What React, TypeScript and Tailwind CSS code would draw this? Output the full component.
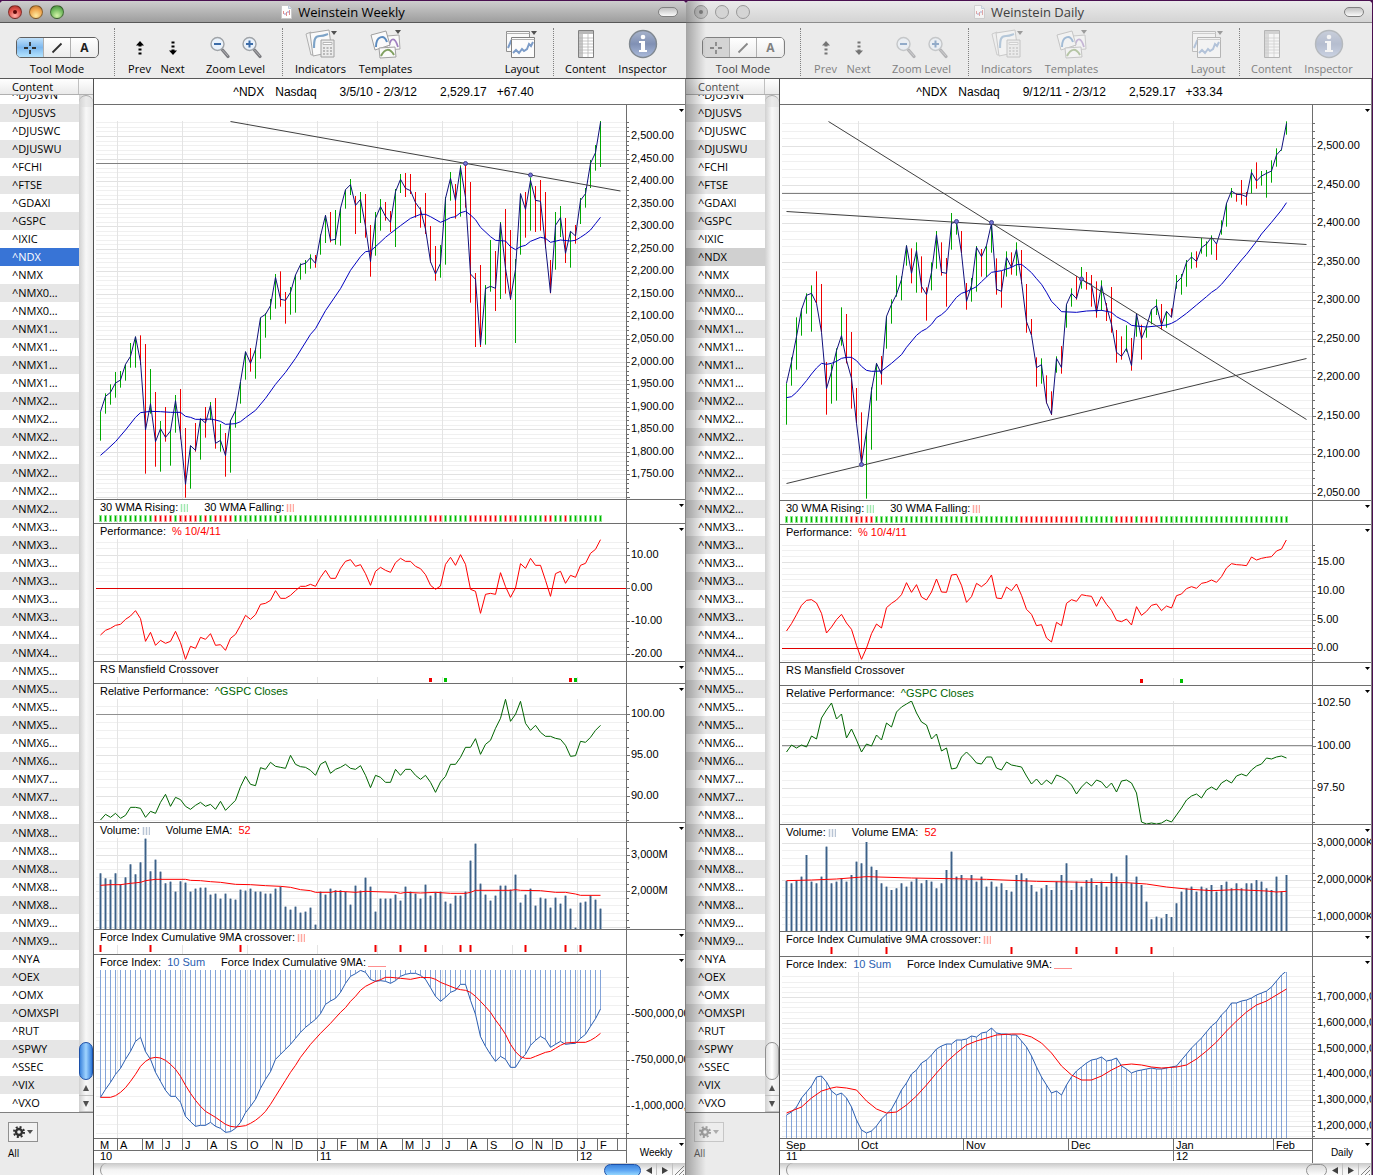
import { createContext, useContext, useState } from 'react';
import type { ReactNode } from 'react';
import clsx from 'clsx';

// Series are stored in thirds of a pixel below the panel group's base line.
const nums = (text: string) => text.trim().split(/\s+/).map(Number);
const fromPixels = (base: number, text: string) => nums(text).map((y) => (y - base) * 3).join(' ');
const barX = (index: number) => 6.5 + index * 5;

const MAIN = 100;
const MID = 495;
const LOW = 820;

type Axis = { major: number; step: number; divisions: number; labels: string[] };
type Line = { base: number; points: string; color: string };
type Label = { text: string; color?: string; gap?: boolean; glyph?: 'bars' | 'line'; glyphColor?: string };

type Panel = {
  id: string;
  top: number;
  bottom: number;
  labels: Label[];
  axis?: Axis;
  rule?: { y: number; color: string };
  lines?: Line[];
  closes?: string;
  ranges?: string;
  strip?: string;
  marks?: { at: number; color: string; square?: boolean }[];
  volume?: string;
  hatch?: string;
  hangs?: boolean;
  trends?: number[][];
  handles?: number[][];
};

type Chart = {
  title: string;
  quote: string[];
  active: boolean;
  period: string;
  quarters: number[];
  months: { x: number; label: string }[];
  years: { x: number; label: string }[];
  panels: Panel[];
};

const GREEN = '#00a800';
const RED = '#f00000';

const weekly: Chart = {
  title: 'Weinstein Weekly',
  quote: ['^NDX', 'Nasdaq', '3/5/10 - 2/3/12', '2,529.17', '+67.40'],
  active: true,
  period: 'Weekly',
  quarters: [23, 88, 153, 223, 283, 348, 418, 483],
  months: [
    { x: 3, label: 'M' }, { x: 23, label: 'A' }, { x: 48, label: 'M' }, { x: 68, label: 'J' }, { x: 88, label: 'J' },
    { x: 113, label: 'A' }, { x: 133, label: 'S' }, { x: 153, label: 'O' }, { x: 178, label: 'N' }, { x: 198, label: 'D' },
    { x: 223, label: 'J' }, { x: 243, label: 'F' }, { x: 263, label: 'M' }, { x: 283, label: 'A' }, { x: 308, label: 'M' },
    { x: 328, label: 'J' }, { x: 348, label: 'J' }, { x: 373, label: 'A' }, { x: 393, label: 'S' }, { x: 418, label: 'O' },
    { x: 438, label: 'N' }, { x: 458, label: 'D' }, { x: 483, label: 'J' }, { x: 503, label: 'F' }, { x: 523, label: '' },
  ],
  years: [{ x: 3, label: '10' }, { x: 223, label: '11' }, { x: 483, label: '12' }],
  panels: [
    {
      id: 'price',
      top: 105,
      bottom: 499,
      labels: [],
      axis: {
        major: 136, step: 22.56, divisions: 5,
        labels: ['2,500.00', '2,450.00', '2,400.00', '2,350.00', '2,300.00', '2,250.00', '2,200.00', '2,150.00', '2,100.00', '2,050.00', '2,000.00', '1,950.00', '1,900.00', '1,850.00', '1,800.00', '1,750.00'],
      },
      rule: { y: 163, color: '#808080' },
      closes: `935 889 877 849 840 793 769 710 785 990 911 1025 986 1012 993 902 1003 1153 1037 1051 956 969 916 1030 1021 1067 962 932 845 755
        790 748 653 643 617 532 598 601 577 525 494 490 473 490 408 346 421 418 325 269 254 316 298 379 485 355 320 349 367 275
        238 265 272 308 329 387 485 522 490 295 235 301 202 292 522 538 735 566 559 565 370 505 597 508 281 328 241 301 304 438
        579 376 353 460 394 408 301 281 190 158 67`,
      ranges: `935 1022 880 941 853 914 816 893 813 863 793 842 729 803 710 803 706 795 732 1121 807 941 876 1100 963 1115 921 1025 990 1097 885 998
        867 1018 984 1193 1037 1166 969 1055 956 1079 921 1013 906 960 894 1046 972 1055 999 1130 960 1118 932 983 845 911 755 839 744 815 745 836
        653 776 640 713 597 659 522 626 514 620 576 671 561 644 525 638 490 539 480 521 463 506 465 503 403 464 346 429 336 427 330 434
        325 437 269 326 237 285 288 402 276 369 282 413 375 530 336 467 297 392 306 362 333 396 267 441 222 279 219 291 222 282 276 353
        322 383 279 402 378 488 438 542 435 533 291 494 216 302 252 356 196 350 192 323 246 608 519 741 495 741 555 734 420 575 453 633
        366 597 327 581 390 600 477 729 281 464 276 413 232 392 258 396 240 392 276 445 480 580 336 509 318 411 354 489 394 503 375 431
        294 372 264 323 180 264 135 212 63 201`,
      lines: [
        {
          base: MAIN, color: '#0000c0',
          points: `0 1066 1 1053 3 1025 5 990 7 952 8 938 10 934 12 935 14 937 16 937 17 949 18 952 19 958 21 958 22 957 23 960 24 964 25 973 27 971 28 965
            29 953 31 931 33 895 35 853 37 817 39 775 42 703 43 686 45 632 48 566 50 511 52 470 53 455 54 453 55 440 57 412 58 400 60 377 62 355 64 343
            65 343 66 350 68 367 69 361 70 353 71 350 72 338 73 334 74 345 75 359 76 382 78 410 79 421 81 423 82 440 83 449 84 440 85 436 86 424 88 412
            89 415 90 427 92 420 94 423 95 421 96 412 97 402 98 390 99 371 100 352`,
        },
      ],
      trends: [[136.5, 121.5, 526.5, 191]],
      handles: [[371.5, 163.5], [436.5, 175]],
    },
    {
      id: 'wma',
      top: 500,
      bottom: 523,
      labels: [
        { text: '30 WMA Rising:', glyph: 'bars', glyphColor: '#a0e8b0' },
        { text: '30 WMA Falling:', gap: true, glyph: 'bars', glyphColor: '#ffa8a0' },
      ],
      strip: 'g11 r4 g1 r4 g1 r1 g1 r4 g39 r3 g5 r6 g1 r3 g5 r2 g2 r1 g7',
    },
    {
      id: 'performance',
      top: 524,
      bottom: 661,
      labels: [{ text: 'Performance:' }, { text: '% 10/4/11', color: 'text-[#ff0000]' }],
      axis: { major: 555, step: 33, divisions: 5, labels: ['10.00', '0.00', '-10.00', '-20.00'] },
      rule: { y: 588, color: '#e00000' },
      lines: [
        {
          base: MID, color: '#ff0000',
          points: `420 406 400 391 388 373 363 347 371 439 412 451 436 445 439 409 443 493 454 460 427 433 416 451 449 466 430 418 391 361
            373 359 328 325 316 287 310 310 301 287 274 274 268 274 247 226 250 250 220 199 194 214 209 236 271 229 217 226 232 203
            190 199 199 214 221 239 271 283 273 208 187 211 179 208 283 289 355 298 295 298 233 275 307 279 206 220 190 211 211 256
            304 236 229 265 241 247 211 205 175 163 134`,
        },
      ],
    },
    {
      id: 'mansfield',
      top: 662,
      bottom: 683,
      labels: [{ text: 'RS Mansfield Crossover' }],
      marks: [
        { at: 66, color: RED, square: true }, { at: 69, color: '#00c000', square: true },
        { at: 94, color: RED, square: true }, { at: 95, color: '#00c000', square: true },
      ],
    },
    {
      id: 'relative',
      top: 684,
      bottom: 822,
      labels: [{ text: 'Relative Performance:' }, { text: '^GSPC Closes', color: 'text-[#006400]' }],
      axis: { major: 714, step: 40.8, divisions: 5, labels: ['100.00', '95.00', '90.00'] },
      rule: { y: 714, color: '#909090' },
      lines: [
        {
          base: MID, color: '#006400',
          points: `975 958 967 955 970 961 937 937 940 967 949 955 922 898 934 907 914 934 943 931 922 934 928 943 919 946 931 916 875 844
            868 872 818 823 802 814 817 820 781 808 815 817 826 841 808 799 835 823 817 808 820 823 812 841 878 841 847 862 862 823
            841 823 823 841 853 841 862 892 861 844 808 808 787 757 757 731 778 748 736 700 670 613 679 658 619 685 706 691 712 724
            724 730 733 751 784 782 739 742 727 706 691`,
        },
      ],
    },
    {
      id: 'volume',
      top: 823,
      bottom: 929,
      labels: [
        { text: 'Volume:', glyph: 'bars', glyphColor: '#b8c4d4' },
        { text: 'Volume EMA:', gap: true },
        { text: '52', color: 'text-[#ff0000]' },
      ],
      axis: { major: 855, step: 36, divisions: 5, labels: ['3,000M', '2,000M'] },
      volume: `160 175 179 160 193 172 133 163 127 56 154 119 155 190 185 215 184 188 215 206 203 203 224 221 236 221 236 239 209 212
        206 215 215 221 221 206 200 260 269 260 278 275 263 314 215 224 206 211 211 215 254 197 212 173 200 275 236 236 236 224
        242 200 215 221 236 194 227 217 215 245 251 227 227 215 122 71 191 224 242 227 197 197 209 164 248 224 206 257 233 236
        263 233 251 227 266 323 248 245 227 239 266`,
      lines: [
        {
          base: LOW, color: '#ff0000',
          points: `0 196 2 194 4 194 6 190 8 187 9 182 11 178 17 178 18 181 20 182 22 185 24 187 27 193 30 194 33 197 36 199 38 202 40 209 42 212 43 217
            46 217 47 214 49 215 51 217 53 214 59 217 60 220 61 217 64 219 67 217 70 220 73 220 74 217 75 211 82 211 83 209 84 211 88 212 91 217 93 217
            95 222 96 226 100 226`,
        },
      ],
    },
    {
      id: 'crossover',
      top: 930,
      bottom: 954,
      labels: [{ text: 'Force Index Cumulative 9MA crossover:', glyph: 'bars', glyphColor: '#ffa8a0' }],
      marks: [0, 10, 28, 55, 60, 65, 72, 74, 85, 93, 96].map((at) => ({ at, color: RED })),
    },
    {
      id: 'force',
      top: 955,
      bottom: 1138,
      labels: [
        { text: 'Force Index:' },
        { text: '10 Sum', color: 'text-[#2a5db0]' },
        { text: 'Force Index Cumulative 9MA:', gap: true, glyph: 'line', glyphColor: '#ff9090' },
      ],
      axis: { major: 1014, step: 45.8, divisions: 5, labels: ['-500,000,000', '-750,000,000', '-1,000,000,000'] },
      hangs: true,
      hatch: `832 808 787 763 745 718 694 664 652 695 718 757 784 811 829 829 847 889 905 919 916 916 907 919 925 937 935 925 907 878
        859 838 805 778 755 718 703 688 673 655 637 622 610 598 581 553 543 535 517 490 469 461 451 457 478 484 482 484 490 482
        469 463 460 460 466 478 503 529 544 532 517 511 493 493 541 583 650 679 703 724 709 718 742 742 718 703 676 661 649 658
        682 673 664 673 671 670 655 643 619 596 567`,
      lines: [
        {
          base: LOW, color: '#ff0000',
          points: `0 832 2 832 3 827 4 817 5 803 6 784 7 763 8 739 9 724 10 715 11 712 12 714 13 721 14 733 15 748 16 769 17 796 18 820 19 841 20 859
            21 874 23 892 25 913 26 919 27 921 29 917 30 910 31 901 32 889 33 874 34 853 35 829 37 781 38 757 39 736 40 712 42 673 44 640 46 610 48 577
            49 563 50 544 51 529 52 511 53 499 55 484 56 479 57 472 58 472 60 475 62 478 64 472 66 473 67 478 68 487 69 493 71 505 72 509 73 511 74 517
            75 529 76 544 77 560 78 577 79 600 80 620 81 643 82 673 83 695 84 710 85 715 86 715 87 709 89 697 90 694 91 685 92 676 93 669 95 667 97 667
            98 661 99 652 100 640`,
        },
      ],
    },
  ],
};

const dailyCloses = `850 785 710 629 586 580 610 697 866 815 752 707 781 835 970 1090 994 871 790 823 649 613 583 538 437 520 452 559 584 517
  404 517 520 370 365 460 604 556 442 470 436 370 568 574 472 503 448 544 665 706 803 794 908 943 775 803 613 580 596 538
  548 553 638 557 620 673 757 769 745 797 641 716 680 629 617 676 634 652 548 532 487 471 484 443 432 412 432 385 310 273
  283 284 290 217 243 228 220 213 165 148 70`;

// Percent change is the same curve as the closes, on a flatter scale around the 10/4/11 close.
const dailyPerformance = nums(dailyCloses).map((v) => Math.round(459 + (v - 994) * 0.3513)).join(' ');

const daily: Chart = {
  title: 'Weinstein Daily',
  quote: ['^NDX', 'Nasdaq', '9/12/11 - 2/3/12', '2,529.17', '+33.34'],
  active: false,
  period: 'Daily',
  quarters: [78, 393],
  months: [
    { x: 3, label: 'Sep' }, { x: 78, label: 'Oct' }, { x: 183, label: 'Nov' }, { x: 288, label: 'Dec' }, { x: 393, label: 'Jan' }, { x: 493, label: 'Feb' },
  ],
  years: [{ x: 3, label: '11' }, { x: 393, label: '12' }],
  panels: [
    {
      id: 'price',
      top: 105,
      bottom: 500,
      labels: [],
      axis: {
        major: 146, step: 38.55, divisions: 5,
        labels: ['2,500.00', '2,450.00', '2,400.00', '2,350.00', '2,300.00', '2,250.00', '2,200.00', '2,150.00', '2,100.00', '2,050.00'],
      },
      rule: { y: 193, color: '#808080' },
      closes: dailyCloses,
      ranges: `850 974 772 857 652 809 625 707 580 641 556 695 514 610 552 697 786 944 793 911 745 902 622 737 642 790 696 926 864 970 937 1090
        994 1196 862 1049 790 902 768 854 649 746 598 671 526 590 529 601 436 497 445 550 427 578 469 578 562 662 487 571 393 506 427 527
        474 620 339 449 365 404 393 460 549 629 534 605 438 575 447 530 436 531 370 458 475 584 513 623 454 530 457 524 427 527 450 551
        552 698 657 706 772 860 775 851 826 910 874 945 769 818 738 821 613 683 565 620 528 599 501 566 516 569 525 620 544 653 541 632
        609 663 561 698 690 788 709 779 676 755 714 812 640 710 674 779 676 713 628 673 598 645 612 689 634 683 625 652 525 566 522 584
        480 560 457 506 454 503 414 461 424 470 406 464 430 480 361 404 309 380 264 293 280 305 240 314 276 317 208 280 187 266 213 257
        210 293 181 248 145 200 148 152 64 104`,
      lines: [
        {
          base: MAIN, color: '#0000c0',
          points: `0 893 1 890 2 877 3 860 4 842 5 822 6 804 7 790 8 793 9 790 10 784 11 775 12 772 13 772 14 782 15 799 16 811 17 814 19 813 21 790
            23 764 24 742 26 706 27 694 28 686 29 673 30 653 31 644 32 631 33 611 34 592 35 580 36 575 38 560 39 545 41 517 43 512 45 502 46 494 47 493
            48 505 49 518 50 536 51 553 52 577 53 604 54 619 55 635 58 637 60 633 63 631 65 637 66 650 67 658 68 665 69 676 70 678 72 681 74 678 76 675
            77 670 78 662 80 640 82 615 84 590 85 577 86 567 87 553 89 517 91 480 92 463 94 424 95 402 97 367 99 330 100 308`,
        },
      ],
      trends: [[48.5, 121.5, 526.5, 419.5], [6.5, 211.5, 526.5, 244.5], [6.5, 483.5, 526.5, 358.5]],
      handles: [[81.5, 464.5], [176.5, 221.5], [211.5, 222.5], [301.5, 279]],
    },
    {
      id: 'wma',
      top: 501,
      bottom: 524,
      labels: [
        { text: '30 WMA Rising:', glyph: 'bars', glyphColor: '#a0e8b0' },
        { text: '30 WMA Falling:', gap: true, glyph: 'bars', glyphColor: '#ffa8a0' },
      ],
      strip: 'g13 r5 g29 r12 g7 r4 g1 r4 g26',
    },
    {
      id: 'performance',
      top: 525,
      bottom: 662,
      labels: [{ text: 'Performance:' }, { text: '% 10/4/11', color: 'text-[#ff0000]' }],
      axis: { major: 562, step: 28.8, divisions: 5, labels: ['15.00', '10.00', '5.00', '0.00'] },
      rule: { y: 648, color: '#e00000' },
      lines: [{ base: MID, color: '#ff0000', points: dailyPerformance }],
    },
    {
      id: 'mansfield',
      top: 663,
      bottom: 685,
      labels: [{ text: 'RS Mansfield Crossover' }],
      marks: [{ at: 71, color: RED, square: true }, { at: 79, color: '#00c000', square: true }],
    },
    {
      id: 'relative',
      top: 686,
      bottom: 824,
      labels: [{ text: 'Relative Performance:' }, { text: '^GSPC Closes', color: 'text-[#006400]' }],
      axis: { major: 703, step: 42.5, divisions: 5, labels: ['102.50', '100.00', '97.50'] },
      rule: { y: 745, color: '#909090' },
      lines: [
        {
          base: MID, color: '#006400',
          points: fromPixels(MID, `752 745 748 745 747 736 739 718 710 703 719 714 738 729 740 752 744 746 735 740 723 727 712 707 704 701
            713 722 725 739 734 751 748 769 768 757 752 757 763 764 757 757 768 770 762 765 766 767 776 784 779 785 780 784 775 777
            780 785 794 787 782 786 780 782 788 783 792 781 780 783 793 822 824 823 824 823 820 822 815 808 800 796 794 798 790 787
            790 783 780 783 776 774 776 770 766 764 758 759 757 756 758`),
        },
      ],
    },
    {
      id: 'volume',
      top: 825,
      bottom: 931,
      labels: [
        { text: 'Volume:', glyph: 'bars', glyphColor: '#b8c4d4' },
        { text: 'Volume EMA:', gap: true },
        { text: '52', color: 'text-[#ff0000]' },
      ],
      axis: { major: 843, step: 37, divisions: 5, labels: ['3,000,000K', '2,000,000K', '1,000,000K'] },
      volume: `183 190 183 170 105 185 190 170 80 190 185 175 185 165 125 130 66 140 150 190 200 210 205 190 200 185 175 190 180 185
        205 190 150 95 170 165 180 165 185 170 200 185 200 190 210 215 165 160 175 195 215 205 195 210 185 165 130 210 185 200
        180 175 195 185 200 160 170 190 106 190 170 195 245 298 290 295 282 291 250 215 205 200 215 200 205 195 215 195 185 205
        190 205 190 190 180 185 205 210 170 215 165`,
      lines: [
        {
          base: LOW, color: '#ff0000',
          points: '0 182 5 180 10 177 16 170 25 174 40 178 50 184 60 187 68 188 72 192 76 201 80 207 85 212 90 209 96 213 98 216 100 214',
        },
      ],
    },
    {
      id: 'crossover',
      top: 932,
      bottom: 956,
      labels: [{ text: 'Force Index Cumulative 9MA crossover:', glyph: 'bars', glyphColor: '#ffa8a0' }],
      marks: [9, 20, 45, 58, 66, 73].map((at) => ({ at, color: RED })),
    },
    {
      id: 'force',
      top: 957,
      bottom: 1138,
      labels: [
        { text: 'Force Index:' },
        { text: '10 Sum', color: 'text-[#2a5db0]' },
        { text: 'Force Index Cumulative 9MA:', gap: true, glyph: 'line', glyphColor: '#ff9090' },
      ],
      axis: {
        major: 997, step: 25.8, divisions: 5,
        labels: ['1,700,000,000', '1,600,000,000', '1,500,000,000', '1,400,000,000', '1,300,000,000', '1,200,000,000'],
      },
      hatch: fromPixels(LOW, `1115 1112 1107 1098 1092 1086 1077 1076 1082 1091 1095 1093 1098 1107 1120 1130 1133 1131 1126 1119 1114
        1109 1100 1090 1083 1074 1070 1063 1060 1055 1049 1046 1044 1044 1040 1040 1039 1036 1037 1033 1032 1028 1033 1034 1034 1035
        1035 1041 1047 1056 1067 1077 1085 1093 1091 1095 1085 1077 1071 1067 1063 1060 1059 1057 1061 1060 1058 1066 1069 1073 1071
        1070 1069 1068 1069 1069 1068 1067 1066 1060 1054 1048 1043 1038 1032 1026 1022 1015 1010 1003 1003 1001 1000 998 995 993
        991 987 981 975 971`),
      lines: [
        {
          base: LOW, color: '#ff0000',
          points: `0 879 3 861 5 834 7 813 9 804 10 801 12 804 14 810 16 843 18 867 20 879 22 876 24 855 26 828 28 795 30 759 32 726 34 699
            36 675 38 663 40 654 42 645 45 642 47 642 49 651 51 669 53 699 55 738 57 765 59 780 61 780 63 768 65 750 67 735 69 732 71 735
            73 741 75 744 78 741 80 735 82 717 84 693 86 666 88 633 90 603 92 576 94 555 96 543 98 525 100 507`,
        },
      ],
    },
  ],
};

const symbols = [
  'DJUSVN', 'DJUSVS', 'DJUSWC', 'DJUSWU', 'FCHI', 'FTSE', 'GDAXI', 'GSPC', 'IXIC', 'NDX', 'NMX',
  ...'00111122222223333334455556677888888'.split('').map((n) => `NMX${n}…`),
  'NMX9…', 'NMX9…', 'NYA', 'OEX', 'OMX', 'OMXSPI', 'RUT', 'SPWY', 'SSEC', 'VIX', 'VXO',
];

const ActiveContext = createContext(true);

function toPolyline(line: Line) {
  const values = nums(line.points);
  // Dense series hold one value per bar, sparse ones alternate index and value.
  if (values.length === 101) {
    return values.map((v, i) => `${barX(i)},${line.base + v / 3}`).join(' ');
  }
  const out: string[] = [];
  for (let i = 0; i < values.length; i += 2) {
    out.push(`${barX(values[i])},${line.base + values[i + 1] / 3}`);
  }
  return out.join(' ');
}

function expandRuns(strip: string) {
  return strip.split(' ').flatMap((run) => Array<string>(Number(run.slice(1))).fill(run[0]));
}

function gridRows(axis: Axis, top: number, bottom: number) {
  const rows: { y: number; major: boolean; label?: string }[] = [];
  const minor = axis.step / axis.divisions;
  for (let k = -20; k < 100; k += 1) {
    const y = Math.round(axis.major + k * minor);
    if (y < top || y >= bottom) continue;
    const major = k % axis.divisions === 0;
    rows.push({ y, major, label: major ? axis.labels[k / axis.divisions] : undefined });
  }
  return rows;
}

function Plot({ panel, quarters }: { panel: Panel; quarters: number[] }) {
  const top = panel.top + (panel.id === 'price' ? 16 : 15);
  const { bottom } = panel;
  const closes = panel.closes ? nums(panel.closes) : [];
  const ranges = panel.ranges ? nums(panel.ranges) : [];
  const hatch = panel.hatch ? nums(panel.hatch) : [];

  return (
    <svg className="block w-full" height={bottom - top} aria-hidden="true">
      <g transform={`translate(0 ${-top})`}>
        {panel.axis &&
          gridRows(panel.axis, top, bottom).map((row) => (
            <rect key={row.y} x={2} y={row.y} width="100%" height={1} fill={row.major ? '#e2e2e2' : '#f0f0f0'} />
          ))}
        {quarters.map((x) => (
          <rect key={x} x={x} y={top} width={1} height={bottom - top} fill="#e4e4e4" />
        ))}
        {panel.rule && <rect x={2} y={panel.rule.y} width="100%" height={1} fill={panel.rule.color} />}
        {panel.volume &&
          nums(panel.volume).map((v, i) => (
            <g key={i}>
              <rect x={barX(i) - 1.5} y={LOW + v / 3} width={3} height={bottom - LOW} fill="#a4b6c8" />
              <rect x={barX(i) - 0.5} y={LOW + v / 3} width={1} height={bottom - LOW} fill="#3c6088" />
            </g>
          ))}
        {hatch.map((v, i) => {
          const y = LOW + v / 3;
          return (
            <rect key={i} x={barX(i) - 0.5} y={panel.hangs ? top : y} width={1} height={panel.hangs ? y - top : bottom - y} fill="#84a4d8" />
          );
        })}
        {hatch.length > 0 && (
          <polyline points={toPolyline({ base: LOW, points: panel.hatch ?? '', color: '' })} fill="none" stroke="#2a5db0" />
        )}
        {panel.strip &&
          expandRuns(panel.strip).map((c, i) => (
            <g key={i}>
              <rect x={barX(i) - 1.5} y={top} width={3} height={7} fill={c === 'g' ? '#90e890' : '#ff9c9c'} />
              <rect x={barX(i) - 0.5} y={top + 1} width={1} height={5} fill={c === 'g' ? '#00b400' : '#f00000'} />
            </g>
          ))}
        {panel.marks?.map((mark) => (
          <rect
            key={mark.at}
            x={barX(mark.at) - (mark.square ? 1.5 : 1)}
            y={top + (mark.square ? 1 : 0)}
            width={mark.square ? 3 : 2}
            height={mark.square ? 4 : 7}
            fill={mark.color}
          />
        ))}
        {closes.length > 0 &&
          ranges.map((v, k) => {
            if (k % 2) return null;
            const i = k / 2;
            const up = i === 0 || closes[i] <= closes[i - 1];
            return (
              <rect key={i} x={barX(i) - 0.5} y={MAIN + v / 3} width={1} height={(ranges[k + 1] - v) / 3} fill={up ? GREEN : RED} />
            );
          })}
        {panel.lines?.map((line) => (
          <polyline key={line.color} points={toPolyline(line)} fill="none" stroke={line.color} />
        ))}
        {closes.length > 0 && (
          <polyline points={toPolyline({ base: MAIN, points: panel.closes ?? '', color: '' })} fill="none" stroke="#10107c" />
        )}
        {panel.trends?.map(([x1, y1, x2, y2]) => (
          <line key={y1} x1={x1} y1={y1} x2={x2} y2={y2} stroke="#404040" />
        ))}
        {panel.handles?.map(([x, y]) => (
          <circle key={x} cx={x} cy={y} r={2} fill="#7878d8" stroke="#40408c" />
        ))}
      </g>
    </svg>
  );
}

function ScaleColumn({ panel }: { panel: Panel }) {
  return (
    <div className="relative w-[59px] shrink-0 overflow-hidden border-l border-[#6e6e6e]">
      <svg className="block w-full" height={panel.bottom - panel.top}>
        <g transform={`translate(0 ${-panel.top})`}>
          {panel.axis &&
            gridRows(panel.axis, panel.top + 15, panel.bottom).map((row) => (
              <g key={row.y}>
                <rect x={0} y={row.y} width={row.major ? 3 : 2} height={1} fill="#6e6e6e" />
                {row.label && (
                  <text x={4} y={row.y + 3} fontSize={11}>
                    {row.label}
                  </text>
                )}
              </g>
            ))}
        </g>
      </svg>
      <button type="button" aria-label={`${panel.id} options`} className="absolute top-1 right-px">
        <svg width="5" height="3" className="block">
          <path d="M0 0h5L2.5 3z" />
        </svg>
      </button>
    </div>
  );
}

function LabelGlyph({ kind, color }: { kind: 'bars' | 'line'; color?: string }) {
  if (kind === 'line') {
    return (
      <svg width="18" height="10" className="block">
        <path d="M0 8.5h18" stroke={color} />
      </svg>
    );
  }
  return (
    <svg width="8" height="8" className="block">
      <path d="M1.500 0v8M4.500 0v8M7.500 0v8" stroke={color} strokeWidth="1.5" />
    </svg>
  );
}

function PanelRow({ panel, quarters }: { panel: Panel; quarters: number[] }) {
  return (
    <section className="flex border-b border-[#6e6e6e]">
      <div className="min-w-0 flex-1 overflow-hidden">
        <div className={clsx('flex items-center pl-1.5 text-[11px] whitespace-nowrap', panel.id === 'price' ? 'h-4' : 'h-[15px]')}>
          {panel.labels.map((label) => (
            <span key={label.text} className={clsx('mr-1.5 flex items-center gap-0.5', label.gap && 'ml-2.5', label.color)}>
              {label.text}
              {label.glyph && <LabelGlyph kind={label.glyph} color={label.glyphColor} />}
            </span>
          ))}
        </div>
        <Plot panel={panel} quarters={quarters} />
      </div>
      <ScaleColumn panel={panel} />
    </section>
  );
}

function TimeScale({ chart }: { chart: Chart }) {
  return (
    <div className="flex">
      <svg className="block min-w-0 flex-1" height="22">
        <rect x="0" y="11" width="100%" height="1" fill="#6e6e6e" />
        {chart.months.map((month, i) => (
          <g key={month.x}>
            {i > 0 && <rect x={month.x} y="0" width="1" height="11" fill="#6e6e6e" />}
            <text x={month.x + 3} y="10" fontSize="11">
              {month.label}
            </text>
          </g>
        ))}
        {chart.years.map((year, i) => (
          <g key={year.x}>
            {i > 0 && <rect x={year.x} y="11" width="1" height="11" fill="#6e6e6e" />}
            <text x={year.x + 3} y="21" fontSize="11">
              {year.label}
            </text>
          </g>
        ))}
      </svg>
      <div className="relative w-[59px] shrink-0 border-l border-[#6e6e6e]">
        <select aria-label="Period" defaultValue={chart.period} className="h-5 w-full appearance-none text-center text-[10px]">
          <option>{chart.period}</option>
        </select>
        <svg width="5" height="3" className="pointer-events-none absolute top-1 right-px">
          <path d="M0 0h5L2.5 3z" />
        </svg>
      </div>
    </div>
  );
}

function TitleBar({ title }: { title: string }) {
  const active = useContext(ActiveContext);
  const lights = active
    ? [
        'bg-[radial-gradient(circle_at_50%_80%,#ffb0a8,#e0524a_55%,#9c2c24)]',
        'bg-[radial-gradient(circle_at_50%_80%,#ffeaa0,#f0a850_55%,#b06c28)]',
        'bg-[radial-gradient(circle_at_50%_80%,#d4f4a8,#74bc60_55%,#3c8030)]',
      ]
    : ['bg-[#c4c4c4]', 'bg-[#d4d4d4]', 'bg-[#d4d4d4]'];
  return (
    <header
      className={clsx(
        'grid h-[22px] grid-cols-[1fr_auto_1fr] items-center border-b px-2',
        active ? 'border-[#585858] bg-linear-to-b from-[#cecece] to-[#9e9e9e]' : 'border-[#8c8c8c] bg-linear-to-b from-[#ebebeb] to-[#d4d4d4]',
      )}
    >
      <div className="flex gap-[7px]">
        {['Close', 'Minimize', 'Zoom'].map((name, i) => (
          <button
            key={name}
            type="button"
            aria-label={name}
            className={clsx('flex size-3.5 items-center justify-center rounded-full border', lights[i], active ? 'border-black/40' : 'border-[#999]')}
          >
            {i === 0 && <span className={clsx('size-1 rounded-full', active ? 'bg-[#5c0808]' : 'bg-[#808080]')} />}
          </button>
        ))}
      </div>
      <h1 className={clsx('flex items-center gap-1.5 text-[13px] leading-5', active ? 'text-black' : 'text-[#404040]')}>
        <svg width="11" height="14" viewBox="0 0 11 14" className={active ? '' : 'opacity-70'}>
          <path d="M.5.5h7l3 3v10H.5z" fill="#fff" stroke="#c8c8c8" />
          <path d="M7.5.5v3h3" fill="#e0e8f0" stroke="#b8c8d8" />
          <path d="M2.500 6v3M5.500 7v4M8.500 5v5" stroke="#e09090" />
          <path d="M4 8v2M7 6v2" stroke="#9090c8" />
        </svg>
        {title}
      </h1>
      <button type="button" aria-label="Toolbar" className="h-2.5 w-5 justify-self-end rounded-full border border-[#808080] bg-linear-to-b from-[#c0c0c0] to-[#fafafa]" />
    </header>
  );
}

function ToolItem({ label, className, children }: { label: string; className: string; children: ReactNode }) {
  const active = useContext(ActiveContext);
  return (
    <button type="button" className={clsx('flex flex-col items-center', className)}>
      <span className={clsx('flex h-[33px] items-center justify-center pb-0.5', !active && 'opacity-50')}>{children}</span>
      <span className={clsx('text-[11px] leading-4 whitespace-nowrap', active ? 'text-black' : 'text-[#808080]')}>{label}</span>
    </button>
  );
}

function Divider() {
  return <div className="mb-0.5 w-px self-stretch border-l border-dotted border-[#808080]" />;
}

function Magnifier({ plus }: { plus?: boolean }) {
  return (
    <svg width="20" height="24" viewBox="0 0 20 24">
      <path d="M12.500 14l5.500 6.500" stroke="#7c7c80" strokeWidth="3.200" strokeLinecap="round" />
      <path d="M12.500 14l5.500 6" stroke="#b0b0b4" strokeWidth="1" />
      <circle cx="7.500" cy="8" r="6.500" fill="#eaf2fb" stroke="#a0a4a8" strokeWidth="1.400" />
      <path d={plus ? 'M4 8h7M7.500 4.500v7' : 'M4 8h7'} stroke="#3c6ca8" strokeWidth="2" />
    </svg>
  );
}

function Step({ down }: { down?: boolean }) {
  return (
    <svg width="8" height="14" viewBox="0 0 8 14" className={down ? 'mt-2 rotate-180' : 'mt-2'}>
      <path d="M4 0l4 4.500H0z" />
      <rect x="2.500" y="4" width="3" height="1.500" />
      <rect x="2.500" y="7.500" width="3" height="2" />
      <rect x="2.500" y="11.500" width="3" height="2" />
    </svg>
  );
}

function Toolbar() {
  const active = useContext(ActiveContext);
  const modes = [
    <path key="c" d="M8 2v4M8 10v4M2 8h4M10 8h4" />,
    <path key="l" d="M3.500 12.500l9-9" />,
  ];
  return (
    <div className={clsx('flex h-14 border-b border-[#585858] pt-[5px]', active ? 'bg-[#ececec]' : 'bg-[#ebebeb]')}>
      <div className="flex w-[114px] flex-col items-center">
        <div className="flex h-[33px] items-end pb-[3px]">
          <div className={clsx('flex h-[21px] w-[83px] overflow-hidden rounded-[5px] border', active ? 'border-[#606060]' : 'border-[#808080]')}>
            {modes.map((mode, i) => (
              <button
                key={i}
                type="button"
                aria-label={i ? 'Line' : 'Crosshair'}
                className={clsx(
                  'flex flex-1 items-center justify-center border-r border-[#b0b0b0]',
                  i === 0 && active && 'bg-linear-to-b from-[#bfe0fa] via-[#7db8ee] to-[#b4e4ff]',
                  i === 0 && !active && 'bg-[#d4d4d4]',
                  i === 1 && 'bg-linear-to-b from-white to-[#ececec]',
                )}
              >
                <svg width="16" height="16" fill="none" stroke={active ? '#303030' : '#888'} strokeWidth="1.800">
                  {mode}
                </svg>
              </button>
            ))}
            <button
              type="button"
              className={clsx('flex-1 bg-linear-to-b from-white to-[#ececec] text-xs leading-5 font-bold', active ? 'text-[#202020]' : 'text-[#808080]')}
            >
              A
            </button>
          </div>
        </div>
        <span className={clsx('text-[11px] leading-4', active ? 'text-black' : 'text-[#404040]')}>Tool Mode</span>
      </div>
      <Divider />
      <ToolItem label="Prev" className="ml-2 w-[33px]">
        <Step />
      </ToolItem>
      <ToolItem label="Next" className="w-[33px]">
        <Step down />
      </ToolItem>
      <ToolItem label="Zoom Level" className="w-[93px]">
        <span className="mt-2 flex gap-3">
          <Magnifier />
          <Magnifier plus />
        </span>
      </ToolItem>
      <Divider />
      <ToolItem label="Indicators" className="ml-[5px] w-[65px]">
        <svg width="34" height="30" viewBox="0 0 34 30">
          <path d="M2 5l5-2 5 22-5 1z" fill="#f2f2f2" stroke="#b0b0b0" />
          <path d="M6 4l19-3 3 22-19 4z" fill="#fafafa" stroke="#a8a8a8" />
          <path d="M10 19c0-9 1-12 6-12s5-1 8-2" fill="none" stroke="#7ea4c8" strokeWidth="2.200" />
          <path d="M17 11h13v17H17z" fill="#ececec" stroke="#a0a0a0" />
          <path d="M19 13.500h9v2h-9z" fill="#fff" stroke="#b8b8b8" />
          <path d="M19 19h9M19 22h9M19 25h9" stroke="#a8a8a8" strokeDasharray="2 1.500" strokeWidth="1.500" />
          <path d="M27 2h6l-3 4z" fill="#505050" />
        </svg>
      </ToolItem>
      <ToolItem label="Templates" className="w-[65px]">
        <svg width="34" height="30" viewBox="0 0 34 30">
          <path d="M18 7l12-1 1 14-13 1z" fill="#fafafa" stroke="#a8a8a8" />
          <path d="M20 17c2-9 6-9 9 1" fill="none" stroke="#a080c0" strokeWidth="1.800" />
          <path d="M2 6l15-4 4 14-15 5z" fill="#fafafa" stroke="#a0a0a0" />
          <path d="M7 18c0-11 8-13 11-5" fill="none" stroke="#5c8cc0" strokeWidth="2" />
          <path d="M10 19l16-1 1 10-16 1z" fill="#fafafa" stroke="#a0a0a0" />
          <path d="M12 27c4-8 9-8 13-1" fill="none" stroke="#80a060" strokeWidth="2" />
          <path d="M26 1h6l-3 4z" fill="#505050" />
        </svg>
      </ToolItem>
      <div className="flex-1" />
      <ToolItem label="Layout" className="w-[62px]">
        <svg width="34" height="30" viewBox="0 0 34 30">
          <path d="M1.500 2.500h23v20h-23z" fill="#fafafa" stroke="#909090" />
          <path d="M1.500 4.500h23" stroke="#b0b0b0" />
          <path d="M3 19l3-7 3 2" fill="none" stroke="#7c9cc8" strokeWidth="2" />
          <path d="M6.500 8.500h23v20h-23z" fill="#fcfcfc" stroke="#808080" />
          <path d="M6.500 10.500h23" stroke="#b0b0b0" />
          <path d="M8 24l3-3 3 3 3-4 2 2 3-2 2-5 2 2 2-4" fill="none" stroke="#7c9cc8" strokeWidth="2" />
          <path d="M26 2h6l-3 4z" fill="#505050" />
        </svg>
      </ToolItem>
      <Divider />
      <ToolItem label="Content" className="ml-[3px] w-[57px]">
        <svg width="16" height="28" viewBox="0 0 16 28">
          <path d="M.5.5h15v27H.5z" fill="#fff" stroke="#808080" />
          <path d="M1 1h14v3H1z" fill="#b8b8b8" />
          <path d="M1 4h4v23H1z" fill="#c8c8c8" />
          <path d="M1 8h14M1 11h14M1 14h14M1 17h14M1 20h14M1 23h14M10 4v23" stroke="#b0b0b0" strokeWidth="0.700" />
        </svg>
      </ToolItem>
      <ToolItem label="Inspector" className="mr-[15px] w-[57px]">
        <svg width="30" height="30" viewBox="0 0 30 30">
          <defs>
            <linearGradient id="inspector" x2="0" y2="1">
              <stop offset="0" stopColor="#a8b4cc" />
              <stop offset="0.500" stopColor="#8090b4" />
              <stop offset="1" stopColor="#acbcdc" />
            </linearGradient>
          </defs>
          <circle cx="15" cy="15" r="13.500" fill="url(#inspector)" stroke="#808890" strokeWidth="1.400" />
          <circle cx="15" cy="8" r="2.300" fill="#fff" />
          <path d="M11 12h6v9h2v2h-8v-2h2v-7h-2z" fill="#fff" />
        </svg>
      </ToolItem>
    </div>
  );
}

function Sidebar() {
  const active = useContext(ActiveContext);
  const [selected, setSelected] = useState(9);
  return (
    <aside className="flex w-[94px] shrink-0 flex-col border-r border-[#505050] bg-[#ebebeb]">
      <div className={clsx('flex h-4 border-b border-[#b0b0b0] bg-linear-to-b from-white to-[#eaeaea] text-[11px] leading-4', !active && 'text-[#505050]')}>
        <span className="w-[79px] border-r border-[#c0c0c0] pl-3">Content</span>
      </div>
      <div className="flex border-b border-[#808080]">
        <div className="w-[79px] overflow-hidden">
          <ul className="-mt-[9px] text-[11px] leading-[18px]">
            {symbols.map((symbol, i) => (
              <li key={i}>
                <button
                  type="button"
                  onClick={() => setSelected(i)}
                  className={clsx(
                    'block h-[18px] w-full pl-3 text-left',
                    i === selected ? (active ? 'bg-[#3874d6] text-white' : 'bg-[#d0d0d0]') : i % 2 ? 'bg-[#e6e6e6]' : 'bg-white',
                  )}
                >
                  ^{symbol}
                </button>
              </li>
            ))}
          </ul>
        </div>
        <div className="flex flex-1 flex-col bg-linear-to-r from-[#d0d0d0] via-[#f8f8f8] to-[#e8e8e8]">
          <div className="h-3 rounded-t-full border-t border-[#a8a8a8] bg-[#d8d8d8]/40" />
          <div className="flex-1" />
          <div
            className={clsx(
              'h-[38px] rounded-full border',
              active ? 'border-[#1c50a8] bg-linear-to-r from-[#3c84dc] via-[#a0d4ff] to-[#2c78d8]' : 'border-[#909090] bg-linear-to-r from-[#e0e0e0] via-white to-[#d0d0d0]',
            )}
          />
          {['M4 0l3 6H1z', 'M1 0h6L4 6z'].map((d) => (
            <div key={d} className="flex h-4 items-center justify-center border-b border-[#c0c0c0]">
              <svg width="8" height="6" fill="#505050">
                <path d={d} />
              </svg>
            </div>
          ))}
        </div>
      </div>
      <div className={clsx('px-2 pt-[9px] text-[10px]', !active && 'text-[#606060]')}>
        <button type="button" aria-label="Actions" className={clsx('flex h-5 w-[30px] items-center justify-center gap-0.5 border border-[#909090] bg-[#f2f2f2]', !active && 'opacity-40')}>
          <svg width="12" height="12" viewBox="0 0 12 12">
            <circle cx="6" cy="6" r="3" fill="none" stroke="#303030" strokeWidth="2.400" />
            <circle cx="6" cy="6" r="5" fill="none" stroke="#303030" strokeWidth="2" strokeDasharray="2 1.930" />
          </svg>
          <svg width="6" height="4" fill="#505050">
            <path d="M0 0h6L3 4z" />
          </svg>
        </button>
        <p className="mt-[3px] leading-4">All</p>
      </div>
    </aside>
  );
}

function ScrollFooter() {
  const active = useContext(ActiveContext);
  return (
    <div className="flex h-3.5 items-center bg-linear-to-b from-[#c8c8c8] via-[#f4f4f4] to-[#fcfcfc]">
      <div className="ml-1.5 h-full flex-1 rounded-l-full border-l border-[#909090]" />
      <div
        className={clsx(
          'h-[13px] rounded-full border',
          active ? 'w-[37px] border-[#1c50a8] bg-linear-to-b from-[#3c84dc] via-[#60a8f4] to-[#a0e0ff]' : 'w-[21px] border-[#909090] bg-linear-to-b from-[#d8d8d8] to-white',
        )}
      />
      {['M6 0v7L0 3.500z', 'M0 0v7l6-3.500z'].map((d) => (
        <div key={d} className="flex h-full w-4 items-center justify-center border-r border-[#c0c0c0]">
          <svg width="6" height="7" fill="#404040">
            <path d={d} />
          </svg>
        </div>
      ))}
      <svg width="12" height="14" stroke="#808080">
        <path d="M1 13L11 3M5 13l6-6M9 13l2-2" />
      </svg>
    </div>
  );
}

function ChartWindow({ chart }: { chart: Chart }) {
  const gaps = ['', 'ml-[11px]', 'ml-[23px]', 'ml-[23px]', 'ml-2.5'];
  return (
    <ActiveContext value={chart.active}>
      <main className="relative flex min-w-0 flex-1 flex-col overflow-hidden rounded-t-[4px] bg-white">
        <TitleBar title={chart.title} />
        <Toolbar />
        <div className="flex">
          <Sidebar />
          <div className="flex min-w-0 flex-1 flex-col border-r border-[#808080] font-['Liberation_Sans',Arial,sans-serif]">
            <div className="flex h-[26px] items-center justify-center border-b border-[#6e6e6e] pr-3 text-xs">
              {chart.quote.map((part, i) => (
                <span key={part} className={gaps[i]}>
                  {part}
                </span>
              ))}
            </div>
            {chart.panels.map((panel) => (
              <PanelRow key={panel.id} panel={panel} quarters={chart.quarters} />
            ))}
            <TimeScale chart={chart} />
            <ScrollFooter />
          </div>
        </div>
        {!chart.active && <div className="pointer-events-none absolute inset-y-0 left-0 w-5 bg-linear-to-r from-black/30 to-transparent" />}
      </main>
    </ActiveContext>
  );
}

export default function App() {
  return (
    <div className="flex bg-[#4a1050] pt-px pr-px font-['Open_Sans','Noto_Sans',sans-serif] text-black">
      <ChartWindow chart={weekly} />
      <ChartWindow chart={daily} />
    </div>
  );
}
